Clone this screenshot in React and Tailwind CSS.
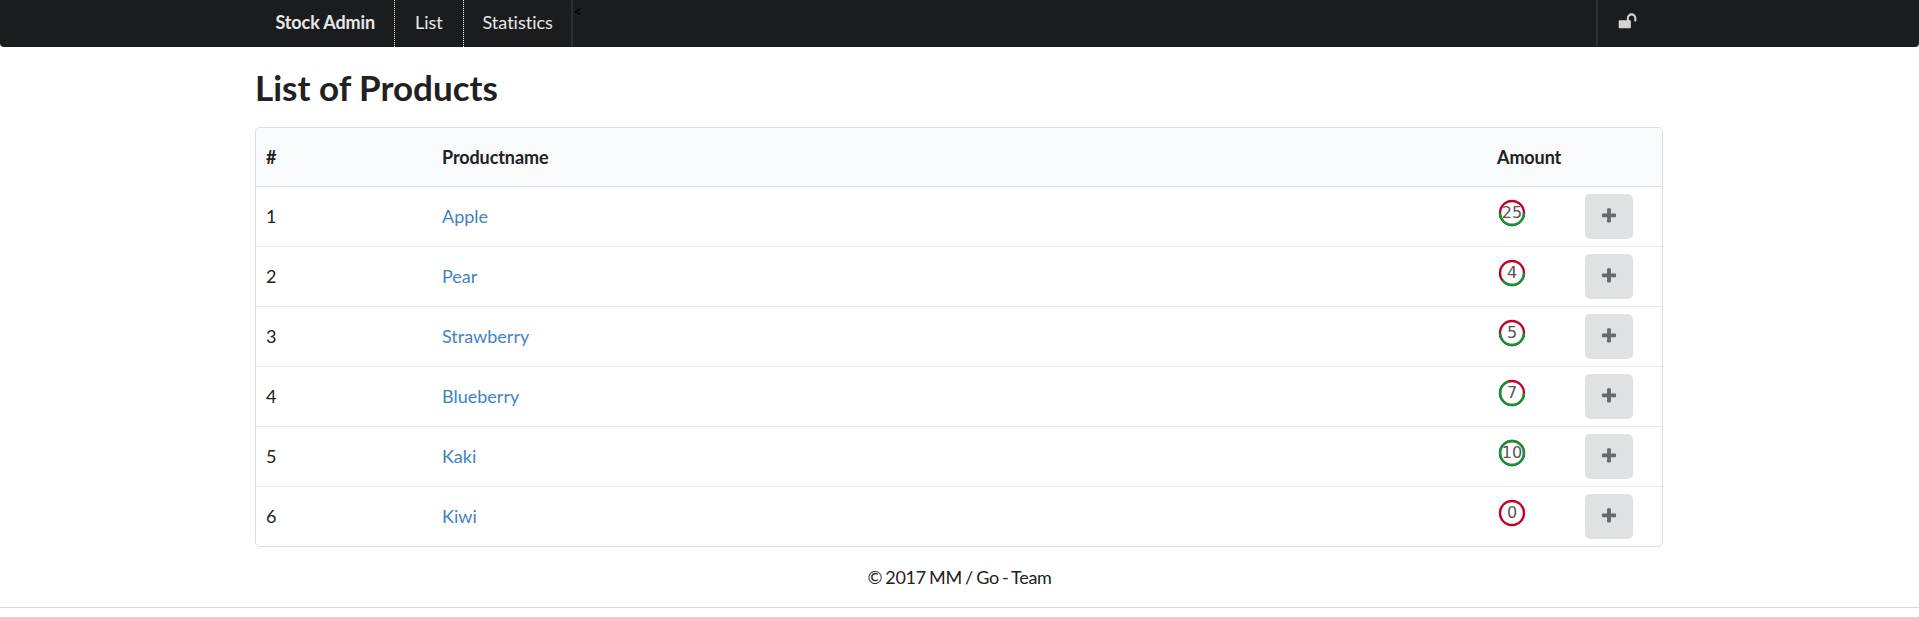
const products = [
  { id: 1, name: "Apple", amount: 25, max: 50 },
  { id: 2, name: "Pear", amount: 4, max: 10 },
  { id: 3, name: "Strawberry", amount: 5, max: 10 },
  { id: 4, name: "Blueberry", amount: 7, max: 10 },
  { id: 5, name: "Kaki", amount: 10, max: 10 },
  { id: 6, name: "Kiwi", amount: 0, max: 10 },
];

function UnlockIcon() {
  return (
    <svg viewBox="0 0 1792 1792" className="h-[19px] w-[19px]" fill="currentColor">
      <path d="M1728 576v256q0 26-19 45t-45 19h-64q-26 0-45-19t-19-45v-256q0-106-75-181t-181-75-181 75-75 181v192h96q40 0 68 28t28 68v576q0 40-28 68t-68 28h-960q-40 0-68-28t-28-68v-576q0-40 28-68t68-28h672v-192q0-185 131.5-316.5t316.5-131.5 316.5 131.5 131.5 316.5z" />
    </svg>
  );
}

function PlusIcon() {
  return (
    <svg viewBox="0 0 1792 1792" className="h-[18px] w-[18px]" fill="currentColor">
      <path d="M1600 736v192q0 40-28 68t-68 28h-416v416q0 40-28 68t-68 28h-192q-40 0-68-28t-28-68v-416h-416q-40 0-68-28t-28-68v-192q0-40 28-68t68-28h416v-416q0-40 28-68t68-28h192q40 0 68 28t28 68v416h416q40 0 68 28t28 68z" />
    </svg>
  );
}

// Ring gauge: the green arc runs clockwise from three o'clock.
function Gauge({ amount, max }) {
  return (
    <svg viewBox="0 0 28 28" className="h-7 w-7" fill="none" strokeWidth="2.4">
      <circle cx="14" cy="14" r="12" stroke="#c10027" />
      {amount > 0 && (
        <circle
          cx="14"
          cy="14"
          r="12"
          stroke="#0a9a33"
          pathLength="100"
          strokeDasharray={`${(amount / max) * 100} 100`}
        />
      )}
      <text
        x="14"
        y="19"
        textAnchor="middle"
        fill="#555555"
        stroke="none"
        className="font-['DejaVu_Sans',sans-serif] text-[16px]"
      >
        {amount}
      </text>
    </svg>
  );
}

export default function App() {
  return (
    <div className="bg-white font-['Lato',sans-serif] text-[18px] leading-[26px] text-[#212121] [font-variant-ligatures:none]">
      <nav className="h-[47px] rounded-b bg-[#1b1c1d] text-white/90">
        <div className="ml-[255px] flex h-full w-[1408px]">
          <a className="flex w-[140px] items-center border-r border-dotted border-white pb-[3px] pl-[20.5px] font-bold tracking-[-0.12px]">
            Stock Admin
          </a>
          <a className="flex w-[69px] items-center border-r border-dotted border-white pb-[3px] pl-5">List</a>
          <a className="flex w-[109px] items-center border-r-2 border-[#2d2e2f] pb-[3px] pl-[18.5px]">Statistics</a>
          <span className="text-[16px] leading-[22px] text-black">&lt;</span>
          <a className="ml-auto flex w-[67px] items-center border-l-2 border-[#2d2e2f] pb-[4px] pl-5 text-[#d4d4d5]">
            <UnlockIcon />
          </a>
        </div>
      </nav>
      <main className="ml-[255px] w-[1408px]">
        <h1 className="mt-[18px] h-[62px] text-[35px] leading-[44px] font-bold">List of Products</h1>
        <div className="overflow-hidden rounded-[5px] border border-[#dededf]">
          <div className="grid h-[59px] grid-cols-[176px_1055px_88px_1fr] items-center border-b border-[#e1e2e3] bg-[#f9fafb] pl-[10px] font-bold">
            <span>#</span>
            <span className="tracking-[-0.1px]">Productname</span>
            <span className="tracking-[-0.1px]">Amount</span>
          </div>
          {products.map((p) => (
            <div
              key={p.id}
              className="grid h-[60px] grid-cols-[176px_1055px_88px_1fr] items-center border-b border-[#e8e9e9] pl-[10px] last:h-[59px] last:border-b-0"
            >
              <span className="pb-[2px]">{p.id}</span>
              <a className="pb-[2px] text-[#4183c4]">{p.name}</a>
              <span className="mb-[7px] ml-px">
                <Gauge amount={p.amount} max={p.max} />
              </span>
              <button className="flex h-[45px] w-12 items-center justify-center rounded-[5px] bg-[#e0e1e2] pb-[2px] text-[#68696b]">
                <PlusIcon />
              </button>
            </div>
          ))}
        </div>
      </main>
      <footer className="flex h-[61px] items-center justify-center border-b border-[#d9d9da] tracking-[-0.3px] [word-spacing:-1.1px]">
        © 2017 MM / Go - Team
      </footer>
    </div>
  );
}
